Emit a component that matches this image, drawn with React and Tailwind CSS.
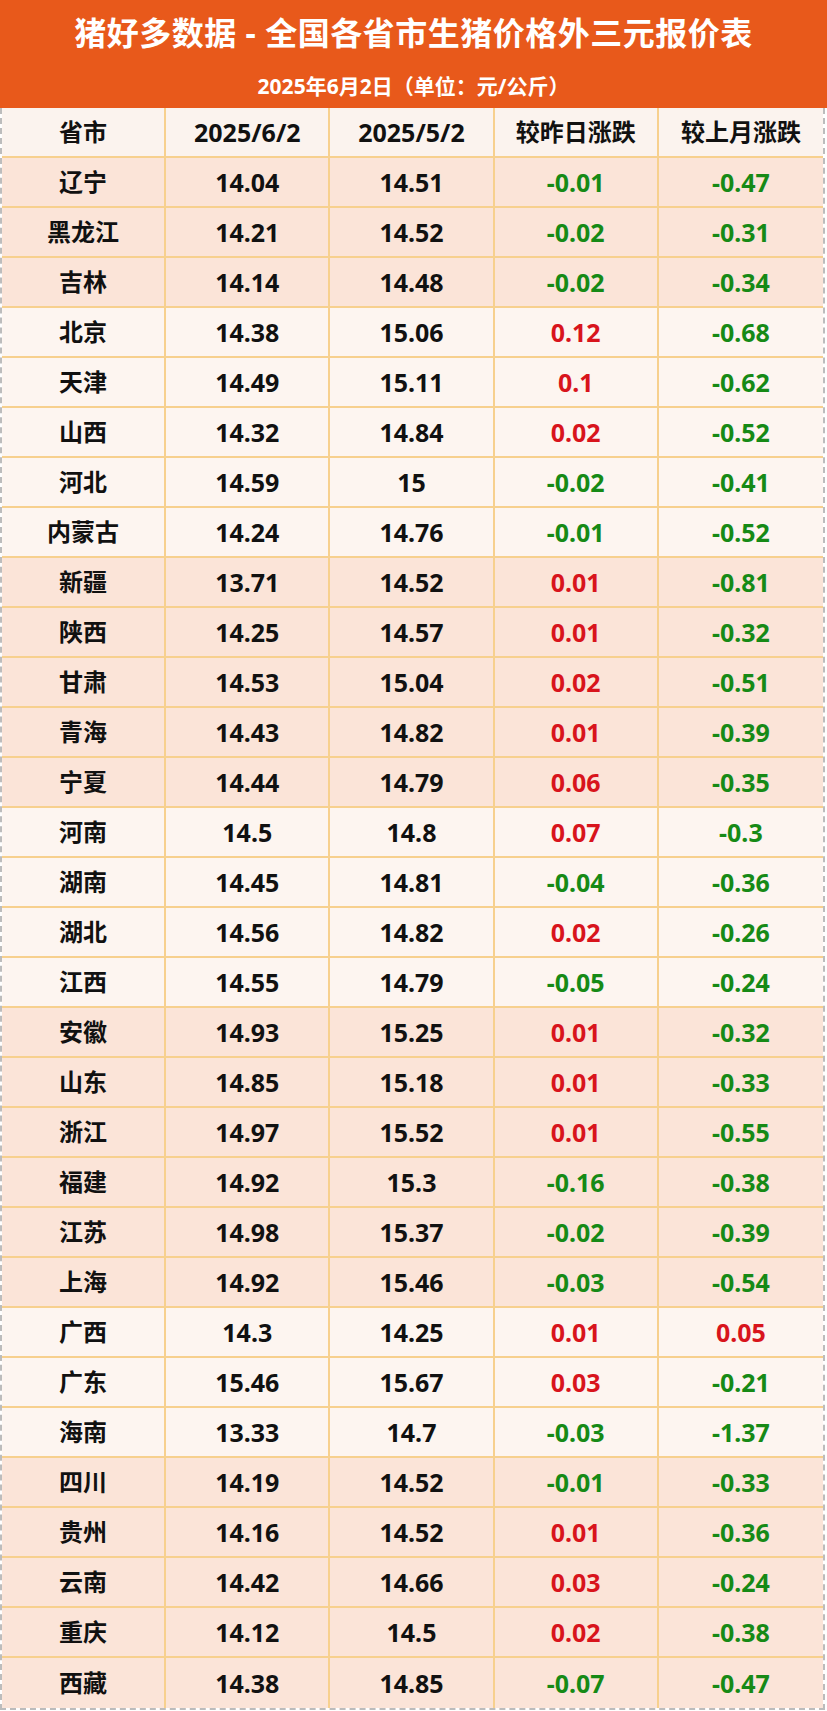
import React from "react";

const rows = [
  ["辽宁", "14.04", "14.51", "-0.01", "-0.47", 1],
  ["黑龙江", "14.21", "14.52", "-0.02", "-0.31", 1],
  ["吉林", "14.14", "14.48", "-0.02", "-0.34", 1],
  ["北京", "14.38", "15.06", "0.12", "-0.68", 0],
  ["天津", "14.49", "15.11", "0.1", "-0.62", 0],
  ["山西", "14.32", "14.84", "0.02", "-0.52", 0],
  ["河北", "14.59", "15", "-0.02", "-0.41", 0],
  ["内蒙古", "14.24", "14.76", "-0.01", "-0.52", 0],
  ["新疆", "13.71", "14.52", "0.01", "-0.81", 1],
  ["陕西", "14.25", "14.57", "0.01", "-0.32", 1],
  ["甘肃", "14.53", "15.04", "0.02", "-0.51", 1],
  ["青海", "14.43", "14.82", "0.01", "-0.39", 1],
  ["宁夏", "14.44", "14.79", "0.06", "-0.35", 1],
  ["河南", "14.5", "14.8", "0.07", "-0.3", 0],
  ["湖南", "14.45", "14.81", "-0.04", "-0.36", 0],
  ["湖北", "14.56", "14.82", "0.02", "-0.26", 0],
  ["江西", "14.55", "14.79", "-0.05", "-0.24", 0],
  ["安徽", "14.93", "15.25", "0.01", "-0.32", 1],
  ["山东", "14.85", "15.18", "0.01", "-0.33", 1],
  ["浙江", "14.97", "15.52", "0.01", "-0.55", 1],
  ["福建", "14.92", "15.3", "-0.16", "-0.38", 1],
  ["江苏", "14.98", "15.37", "-0.02", "-0.39", 1],
  ["上海", "14.92", "15.46", "-0.03", "-0.54", 1],
  ["广西", "14.3", "14.25", "0.01", "0.05", 0],
  ["广东", "15.46", "15.67", "0.03", "-0.21", 0],
  ["海南", "13.33", "14.7", "-0.03", "-1.37", 0],
  ["四川", "14.19", "14.52", "-0.01", "-0.33", 1],
  ["贵州", "14.16", "14.52", "0.01", "-0.36", 1],
  ["云南", "14.42", "14.66", "0.03", "-0.24", 1],
  ["重庆", "14.12", "14.5", "0.02", "-0.38", 1],
  ["西藏", "14.38", "14.85", "-0.07", "-0.47", 1],
];

const font = { fontFamily: '"Noto Sans", "Noto Sans CJK SC", sans-serif' };

function Cell({ children, last, color, num }) {
  return (
    <div
      className={
        "flex items-center justify-center font-bold leading-none " +
        (num ? "text-[25px] " : "text-[24px] ") +
        (last ? "" : "border-r-2 border-[#f7d08e] ") +
        (color === "g" ? "text-[#168a16]" : color === "r" ? "text-[#d8141c]" : "text-[#111111]")
      }
    >
      {children}
    </div>
  );
}

export default function App() {
  return (
    <div className="w-[827px] bg-white" style={font}>
      <div className="h-[108px] bg-[#e8591b] flex flex-col items-center text-white">
        <div className="mt-[12px] h-[42px] flex items-center text-[32px] font-bold leading-none tracking-[0.5px]">
          猪好多数据 - 全国各省市生猪价格外三元报价表
        </div>
        <div className="mt-[20px] h-[24px] flex items-center text-[21px] font-bold leading-none">
          2025年6月2日（单位：元/公斤）
        </div>
      </div>
      <div className="w-[825px] border-l-2 border-r-2 border-b-2 border-dashed border-[#bcbcbc]">
        <div className="grid grid-cols-5 h-[50px] bg-[#fbf3ee] border-b-2 border-[#f7d08e]">
          <Cell>省市</Cell>
          <Cell num>2025/6/2</Cell>
          <Cell num>2025/5/2</Cell>
          <Cell>较昨日涨跌</Cell>
          <Cell last>较上月涨跌</Cell>
        </div>
        {rows.map((r, i) => (
          <div
            key={i}
            className={
              "grid grid-cols-5 h-[50px] " +
              (i === rows.length - 1 ? "" : "border-b-2 border-[#f7d08e] ") +
              (r[5] ? "bg-[#fbe4d8]" : "bg-[#fdf5f0]")
            }
          >
            <Cell>{r[0]}</Cell>
            <Cell num>{r[1]}</Cell>
            <Cell num>{r[2]}</Cell>
            <Cell num color={r[3].startsWith("-") ? "g" : "r"}>{r[3]}</Cell>
            <Cell num last color={r[4].startsWith("-") ? "g" : "r"}>{r[4]}</Cell>
          </div>
        ))}
      </div>
    </div>
  );
}
